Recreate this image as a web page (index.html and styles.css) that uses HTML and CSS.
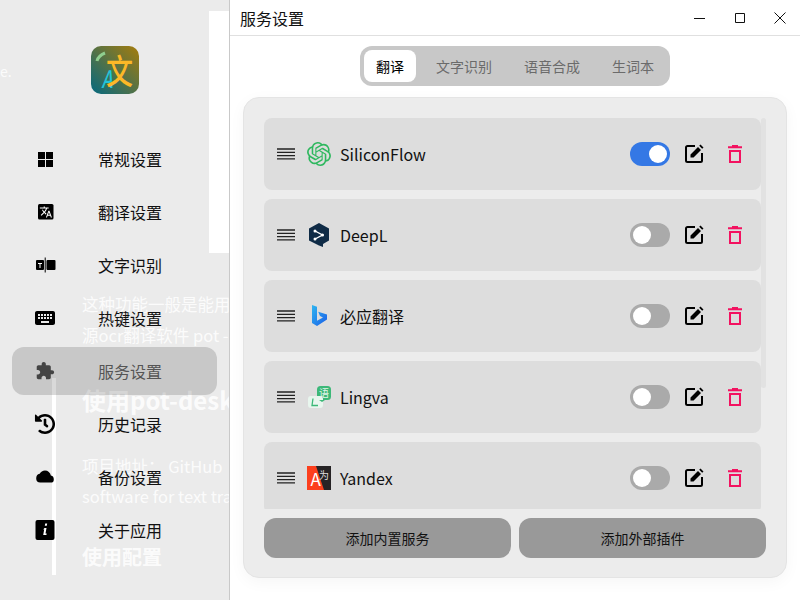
FILE: index.html
```html
<!DOCTYPE html>
<html>
<head>
<meta charset="utf-8">
<title>服务设置</title>
<link rel="stylesheet" href="styles.css">
</head>
<body>
  <div class="window">
    <aside class="sidebar">
      <!-- page behind the translucent window -->
      <div class="ghost">
        <div class="ghost-block"></div>
        <div class="ghost-bar"></div>
        <p class="ghost-line g1">e.</p>
        <p class="ghost-line g2">这种功能一般是能用</p>
        <p class="ghost-line g3">源ocr翻译软件 pot -</p>
        <p class="ghost-line ghost-head g4">使用pot-desk</p>
        <p class="ghost-line g5">项目地址： GitHub</p>
        <p class="ghost-line g6">software for text tra</p>
        <p class="ghost-line ghost-head g7">使用配置</p>
      </div>

      <svg class="logo" viewBox="0 0 48 48">
        <defs>
          <linearGradient id="logoBg" x1="0" y1="1" x2="1" y2="0">
            <stop offset="0" stop-color="#04687f"/>
            <stop offset="1" stop-color="#a67c0c"/>
          </linearGradient>
        </defs>
        <rect width="48" height="48" rx="10" fill="url(#logoBg)"/>
        <path d="M6 15c1-4 3-6 8-8" fill="none" stroke="#8fce8f" stroke-width="3"/>
        <text x="0" y="0" class="logo-a" transform="translate(10.500 42) scale(.8 1.100)">A</text>
        <text x="0" y="0" class="logo-wen" transform="translate(15 37.500) scale(.9 1.150)">文</text>
      </svg>

      <nav class="nav">
        <a class="nav-item">
          <svg class="nav-icon" viewBox="0 0 24 24"><path d="M5 5h7v7H5zM13 5h7v7h-7zM5 13h7v7H5zM13 13h7v7h-7z"/></svg>
          <span>常规设置</span>
        </a>
        <a class="nav-item">
          <svg class="nav-icon" viewBox="0 0 24 24">
            <rect x="5" y="4" width="15.500" height="15.500" rx="1.500"/>
            <path transform="translate(6.300 5.300) scale(.55)" fill="#fff" d="M12.870 15.070l-2.540-2.510.03-.03c1.740-1.940 2.980-4.170 3.710-6.530H17V4h-7V2H8v2H1v1.990h11.170C11.500 7.920 10.440 9.750 9 11.350 8.070 10.320 7.300 9.190 6.690 8h-2c.73 1.630 1.730 3.170 2.980 4.560l-5.090 5.020L4 19l5-5 3.110 3.110.76-2.040zM18.500 10h-2L12 22h2l1.120-3h4.750L21 22h2l-4.500-12zm-2.620 7l1.620-4.500 1.620 4.500h-3.240z"/>
          </svg>
          <span>翻译设置</span>
        </a>
        <a class="nav-item">
          <svg class="nav-icon" viewBox="0 0 24 24">
            <rect x="3" y="7" width="8" height="10" rx="1"/>
            <rect x="13.500" y="7" width="9" height="10" rx="1"/>
            <rect x="11.700" y="4.500" width="1" height="15"/>
            <path fill="#fff" d="M5 10h4v1H7.500v4h-1v-4H5z"/>
          </svg>
          <span>文字识别</span>
        </a>
        <a class="nav-item">
          <svg class="nav-icon" viewBox="0 0 24 24"><path d="M20 5H4c-1.100 0-1.990.9-1.990 2L2 17c0 1.100.9 2 2 2h16c1.100 0 2-.9 2-2V7c0-1.100-.9-2-2-2zm-9 3h2v2h-2V8zm0 3h2v2h-2v-2zM8 8h2v2H8V8zm0 3h2v2H8v-2zm-1 2H5v-2h2v2zm0-3H5V8h2v2zm9 7H8v-2h8v2zm0-4h-2v-2h2v2zm0-3h-2V8h2v2zm3 3h-2v-2h2v2zm0-3h-2V8h2v2z"/></svg>
          <span>热键设置</span>
        </a>
        <a class="nav-item active">
          <svg class="nav-icon" viewBox="-2.500 -2.500 29 29"><path d="M20.500 11H19V7c0-1.100-.9-2-2-2h-4V3.500C13 2.120 11.880 1 10.500 1S8 2.120 8 3.500V5H4c-1.100 0-1.990.9-1.990 2v3.800H3.500c1.490 0 2.700 1.210 2.700 2.700s-1.210 2.700-2.700 2.700H2V20c0 1.100.9 2 2 2h3.800v-1.500c0-1.490 1.210-2.700 2.700-2.700 1.490 0 2.700 1.210 2.700 2.700V22H17c1.100 0 2-.9 2-2v-4h1.500c1.380 0 2.500-1.120 2.500-2.500S21.880 11 20.500 11z"/></svg>
          <span>服务设置</span>
        </a>
        <a class="nav-item">
          <svg class="nav-icon" viewBox="-40 -40 592 592"><path d="M504 255.531c.253 136.640-111.180 248.372-247.820 248.468-59.015.042-113.223-20.530-155.822-54.911-11.077-8.940-11.905-25.541-1.839-35.607l11.267-11.267c8.609-8.609 22.353-9.551 31.891-1.984C173.062 425.135 212.781 440 256 440c101.705 0 184-82.311 184-184 0-101.705-82.311-184-184-184-48.814 0-93.149 18.969-126.068 49.932l50.754 50.754c10.080 10.080 2.941 27.314-11.313 27.314H24c-8.837 0-16-7.163-16-16V38.627c0-14.254 17.234-21.393 27.314-11.314l49.372 49.372C129.209 31.084 189.552 8 256 8c136.810 0 247.747 110.780 248 247.531zm-180.912 78.784l9.823-12.630c8.138-10.463 6.253-25.542-4.210-33.679L288 256.349V152c0-13.255-10.745-24-24-24h-16c-13.255 0-24 10.745-24 24v135.651l65.409 50.874c10.463 8.137 25.541 6.253 33.679-4.210z"/></svg>
          <span>历史记录</span>
        </a>
        <a class="nav-item">
          <svg class="nav-icon" viewBox="-3 -3 30 30"><path d="M19.350 10.040C18.670 6.590 15.640 4 12 4 9.110 4 6.600 5.640 5.350 8.040 2.340 8.360 1 10.910 1 14c0 3.310 1.690 5 5 5h13c2.760 0 4-1.240 4-4 0-2.640-1.050-4.780-3.650-4.960z"/></svg>
          <span>备份设置</span>
        </a>
        <a class="nav-item">
          <svg class="nav-icon" viewBox="0 0 24 24">
            <rect x="2.500" y="2" width="19" height="20" rx="2"/>
            <path fill="#fff" d="M12.200 5.500h2l-.4 2.200h-2zM11.500 10h2l-1 5.500h1.200l-.3 1.500h-3.200l1-5.500h-1z"/>
          </svg>
          <span>关于应用</span>
        </a>
      </nav>
    </aside>

    <main class="main">
      <header class="titlebar">
        <h1 class="title">服务设置</h1>
        <div class="win-controls">
          <button class="win-btn"><svg viewBox="0 0 12 12"><path d="M0 6.500h11"/></svg></button>
          <button class="win-btn"><svg viewBox="0 0 12 12"><path d="M1.500 1.500h9v9h-9z"/></svg></button>
          <button class="win-btn"><svg viewBox="0 0 12 12"><path d="M.5.500l11 11M11.500.500l-11 11"/></svg></button>
        </div>
      </header>

      <div class="tabs-wrap">
        <div class="tabs">
          <span class="tab selected">翻译</span>
          <span class="tab">文字识别</span>
          <span class="tab">语音合成</span>
          <span class="tab">生词本</span>
        </div>
      </div>

      <section class="card">
        <div class="list">
          <div class="scroll-thumb"></div>

          <div class="row">
            <svg class="grip" viewBox="0 0 18 12"><path d="M0 1h18M0 4.300h18M0 7.600h18M0 10.900h18"/></svg>
            <svg class="svc-icon" viewBox="0 0 24 24">
              <path fill="#2fb85f" d="M22.282 9.821a5.985 5.985 0 0 0-.516-4.911 6.046 6.046 0 0 0-6.510-2.900A6.065 6.065 0 0 0 4.981 4.182a5.985 5.985 0 0 0-3.998 2.900 6.046 6.046 0 0 0 .743 7.097 5.980 5.980 0 0 0 .511 4.911 6.051 6.051 0 0 0 6.515 2.900A5.985 5.985 0 0 0 13.260 24a6.056 6.056 0 0 0 5.772-4.206 5.989 5.989 0 0 0 3.998-2.900 6.056 6.056 0 0 0-.748-7.073zm-9.022 12.608a4.476 4.476 0 0 1-2.876-1.041l.142-.080 4.778-2.758a.795.795 0 0 0 .393-.681v-6.737l2.020 1.169a.071.071 0 0 1 .038.052v5.583a4.504 4.504 0 0 1-4.495 4.494zm-9.661-4.125a4.471 4.471 0 0 1-.535-3.014l.142.085 4.783 2.758a.771.771 0 0 0 .781 0l5.843-3.368v2.332a.080.080 0 0 1-.033.062L9.740 19.950a4.499 4.499 0 0 1-6.141-1.646zM2.341 7.896a4.485 4.485 0 0 1 2.366-1.973V11.600a.766.766 0 0 0 .388.677l5.814 3.354-2.020 1.169a.076.076 0 0 1-.071 0l-4.830-2.787A4.504 4.504 0 0 1 2.341 7.872zm16.596 3.856L13.104 8.364 15.119 7.200a.076.076 0 0 1 .071 0l4.830 2.791a4.494 4.494 0 0 1-.676 8.104v-5.677a.790.790 0 0 0-.407-.667zm2.011-3.023l-.142-.085-4.774-2.782a.776.776 0 0 0-.785 0L9.409 9.230V6.897a.066.066 0 0 1 .028-.061l4.830-2.787a4.499 4.499 0 0 1 6.680 4.660zM8.307 12.863l-2.020-1.164a.080.080 0 0 1-.038-.057V6.074a4.499 4.499 0 0 1 7.376-3.454l-.142.081L8.704 5.459a.795.795 0 0 0-.393.681zm1.098-2.365l2.602-1.500 2.607 1.500v3l-2.597 1.500-2.607-1.500z"/>
            </svg>
            <span class="svc-name">SiliconFlow</span>
            <span class="switch on"></span>
            <svg class="act" viewBox="0 0 24 24"><use href="#editIcon"/></svg>
            <svg class="act del" viewBox="0 0 24 24"><use href="#trashIcon"/></svg>
          </div>

          <div class="row">
            <svg class="grip" viewBox="0 0 18 12"><path d="M0 1h18M0 4.300h18M0 7.600h18M0 10.900h18"/></svg>
            <svg class="svc-icon" viewBox="0 0 24 24">
              <path fill="#0f2b46" d="M12 0l10 5.500v12l-6 3.500v3l-4-1.500-10-5v-12z"/>
              <path fill="none" stroke="#fff" stroke-width="1.400" d="M8 8l7.500 4L8 16"/>
              <circle cx="8" cy="8" r="1.500" fill="#fff"/>
              <circle cx="15.500" cy="12" r="1.500" fill="#fff"/>
              <circle cx="8" cy="16" r="1.500" fill="#fff"/>
            </svg>
            <span class="svc-name">DeepL</span>
            <span class="switch"></span>
            <svg class="act" viewBox="0 0 24 24"><use href="#editIcon"/></svg>
            <svg class="act del" viewBox="0 0 24 24"><use href="#trashIcon"/></svg>
          </div>

          <div class="row">
            <svg class="grip" viewBox="0 0 18 12"><path d="M0 1h18M0 4.300h18M0 7.600h18M0 10.900h18"/></svg>
            <svg class="svc-icon" viewBox="0 0 24 24">
              <defs>
                <linearGradient id="bingBg" x1="0" y1="0" x2="1" y2="1">
                  <stop offset="0" stop-color="#2fb6f0"/>
                  <stop offset="1" stop-color="#1a5ee8"/>
                </linearGradient>
              </defs>
              <path fill="url(#bingBg)" d="M5 1l5 1.800v14l6-3.300-3-1.400-1.800-4.300L20 10.500v5L10 22l-5-3z"/>
            </svg>
            <span class="svc-name">必应翻译</span>
            <span class="switch"></span>
            <svg class="act" viewBox="0 0 24 24"><use href="#editIcon"/></svg>
            <svg class="act del" viewBox="0 0 24 24"><use href="#trashIcon"/></svg>
          </div>

          <div class="row">
            <svg class="grip" viewBox="0 0 18 12"><path d="M0 1h18M0 4.300h18M0 7.600h18M0 10.900h18"/></svg>
            <svg class="svc-icon" viewBox="0 0 24 24">
              <rect x="10" y="1" width="14" height="14" rx="3.500" fill="#3cb878"/>
              <text x="17" y="12" class="ling-top">语</text>
              <rect x="1" y="11" width="15" height="12" rx="3" fill="#e8f6ee"/>
              <path d="M6 13.500l-1 7h6" fill="none" stroke="#3cb878" stroke-width="1.300"/>
              <path d="M12 15h6l-3 2z" fill="#3cb878"/>
            </svg>
            <span class="svc-name">Lingva</span>
            <span class="switch"></span>
            <svg class="act" viewBox="0 0 24 24"><use href="#editIcon"/></svg>
            <svg class="act del" viewBox="0 0 24 24"><use href="#trashIcon"/></svg>
          </div>

          <div class="row">
            <svg class="grip" viewBox="0 0 18 12"><path d="M0 1h18M0 4.300h18M0 7.600h18M0 10.900h18"/></svg>
            <svg class="svc-icon" viewBox="0 0 24 24">
              <rect width="24" height="24" fill="#262325"/>
              <path d="M0 0h9l8 24H0z" fill="#fc3f1d"/>
              <text x="3.500" y="20" class="yan-a">A</text>
              <text x="12" y="13" class="yan-b">为</text>
            </svg>
            <span class="svc-name">Yandex</span>
            <span class="switch"></span>
            <svg class="act" viewBox="0 0 24 24"><use href="#editIcon"/></svg>
            <svg class="act del" viewBox="0 0 24 24"><use href="#trashIcon"/></svg>
          </div>
        </div>

        <div class="card-actions">
          <button class="big-btn">添加内置服务</button>
          <button class="big-btn">添加外部插件</button>
        </div>
      </section>
    </main>
  </div>

  <svg class="sprites" width="0" height="0">
    <symbol id="editIcon" viewBox="0 0 24 24">
      <path fill="none" stroke="#000" stroke-width="2" d="M13 4H5.500A1.500 1.500 0 0 0 4 5.500v13A1.500 1.500 0 0 0 5.500 20h13a1.500 1.500 0 0 0 1.500-1.500V11"/>
      <path fill="#000" d="M8.500 12.500L16 5l3 3-7.500 7.500h-3zM17.200 3.800l1.300-1.300 3 3-1.300 1.300z"/>
    </symbol>
    <symbol id="trashIcon" viewBox="0 0 24 24">
      <path fill="#f31260" d="M9 3h6v1.300h4v2H5v-2h4zM6 8h12v13H6zm2 2v9h8v-9z" fill-rule="evenodd"/>
    </symbol>
  </svg>
</body>
</html>
```
FILE: styles.css
```css
html, body {
  margin: 0;
  height: 100%;
}

body {
  font-family: "Noto Sans CJK SC", "Noto Sans", sans-serif;
  color: #111;
  background: #fff;
  overflow: hidden;
}

.window {
  display: flex;
  height: 600px;
}

.sprites {
  position: absolute;
}

/* sidebar */
.sidebar {
  position: relative;
  box-sizing: border-box;
  width: 230px;
  height: 600px;
  padding-top: 46px;
  background: #ebebeb;
  border-right: 1px solid #c9c9c9;
  overflow: hidden;
}

.ghost {
  position: absolute;
  inset: 0;
  color: rgba(255, 255, 255, 0.85);
}

.ghost-block {
  position: absolute;
  left: 209px;
  top: 11px;
  width: 20px;
  height: 242px;
  background: #fff;
}

.ghost-bar {
  position: absolute;
  left: 52px;
  top: 378px;
  width: 4px;
  height: 197px;
  background: #fff;
}

.ghost-line {
  position: absolute;
  left: 82px;
  margin: 0;
  font-size: 16.500px;
  line-height: 24px;
  white-space: nowrap;
}

.ghost-head {
  font-size: 24px;
  line-height: 32px;
  font-weight: 700;
}

.g1 { left: 0; top: 59px; font-size: 14px; }
.g2 { top: 292px; }
.g3 { top: 323px; }
.g4 { top: 384px; }
.g5 { top: 454px; }
.g6 { top: 484px; }
.g7 { top: 541px; font-size: 20px; }

.logo {
  position: relative;
  display: block;
  width: 48px;
  height: 48px;
  margin: 0 0 41px 91px;
}

.logo-a {
  font-size: 22px;
  font-style: italic;
  font-weight: 500;
  fill: #22c3d8;
}

.logo-wen {
  font-size: 30px;
  font-weight: 500;
  fill: #fdb827;
}

.nav {
  position: relative;
  display: flex;
  flex-direction: column;
  gap: 5px;
  padding: 0 12px;
}

.nav-item {
  display: flex;
  align-items: center;
  gap: 41px;
  height: 48px;
  padding-left: 21px;
  border-radius: 12px;
  font-size: 16px;
  color: #111;
}

.nav-item.active {
  background: rgba(0, 0, 0, 0.15);
  color: #555;
}

.nav-item.active .nav-icon {
  fill: #444;
}

.nav-icon {
  width: 24px;
  height: 24px;
  flex: none;
  fill: #000;
}

/* main pane */
.main {
  flex: 1;
  display: flex;
  flex-direction: column;
  min-width: 0;
}

.titlebar {
  display: flex;
  align-items: center;
  justify-content: space-between;
  height: 35px;
  flex: none;
  border-bottom: 1px solid #e0e0e0;
}

.title {
  margin: 0 0 0 10px;
  font-size: 16px;
  font-weight: 400;
  line-height: 24px;
}

.win-controls {
  display: flex;
}

.win-btn {
  display: flex;
  align-items: center;
  justify-content: center;
  width: 40px;
  height: 35px;
  padding: 0;
  border: 0;
  background: none;
}

.win-btn svg {
  width: 12px;
  height: 12px;
  fill: none;
  stroke: #111;
  stroke-width: 1;
}

.tabs-wrap {
  display: flex;
  justify-content: center;
  margin-top: 10px;
}

.tabs {
  display: flex;
  gap: 8px;
  padding: 4px;
  background: #c8c8c8;
  border-radius: 12px;
}

.tab {
  height: 32px;
  padding: 0 12px;
  font-size: 14px;
  line-height: 32px;
  color: #6b6b6b;
  border-radius: 8px;
}

.tab.selected {
  background: #fff;
  color: #000;
}

.card {
  box-sizing: border-box;
  height: 481px;
  margin: 11px 13px 0;
  padding: 20px;
  background: #ececec;
  border: 1px solid #e4e4e4;
  border-radius: 16px;
  box-shadow: 0 4px 16px rgba(0, 0, 0, 0.04);
}

.list {
  position: relative;
  display: flex;
  flex-direction: column;
  gap: 9px;
  height: 391px;
  padding-right: 5px;
  overflow: hidden;
}

.scroll-thumb {
  position: absolute;
  right: 0;
  top: 0;
  width: 5px;
  height: 270px;
  background: #e2e2e2;
  border-radius: 3px;
}

.row {
  display: flex;
  align-items: center;
  flex: none;
  height: 72px;
  padding-left: 13px;
  background: #dddddd;
  border-radius: 8px;
}

.grip {
  width: 18px;
  height: 12px;
  fill: none;
  stroke: #222;
  stroke-width: 1.300;
}

.svc-icon {
  width: 24px;
  height: 24px;
  margin-left: 12px;
}

.svc-name {
  flex: 1;
  margin-left: 9px;
  font-size: 16px;
  line-height: 24px;
}

.ling-top {
  font-size: 10px;
  text-anchor: middle;
  fill: #e3f4ea;
}

.yan-a {
  font-size: 17px;
  fill: #fff;
}

.yan-b {
  font-size: 10px;
  fill: #ddd;
}

.switch {
  position: relative;
  width: 40px;
  height: 24px;
  background: #aaaaaa;
  border-radius: 12px;
}

.switch::after {
  content: "";
  position: absolute;
  left: 3px;
  top: 3px;
  width: 18px;
  height: 18px;
  background: #fff;
  border-radius: 50%;
}

.switch.on {
  background: #3478e5;
}

.switch.on::after {
  left: 19px;
}

.act {
  width: 24px;
  height: 24px;
  margin-left: 12px;
}

.act.del {
  margin-left: 17px;
  margin-right: 14px;
}

.card-actions {
  display: flex;
  gap: 8px;
  margin-top: 9px;
}

.big-btn {
  flex: 1;
  height: 40px;
  padding: 0;
  border: 0;
  border-radius: 12px;
  background: #999;
  font-family: inherit;
  font-size: 14px;
  color: #111;
}
```
